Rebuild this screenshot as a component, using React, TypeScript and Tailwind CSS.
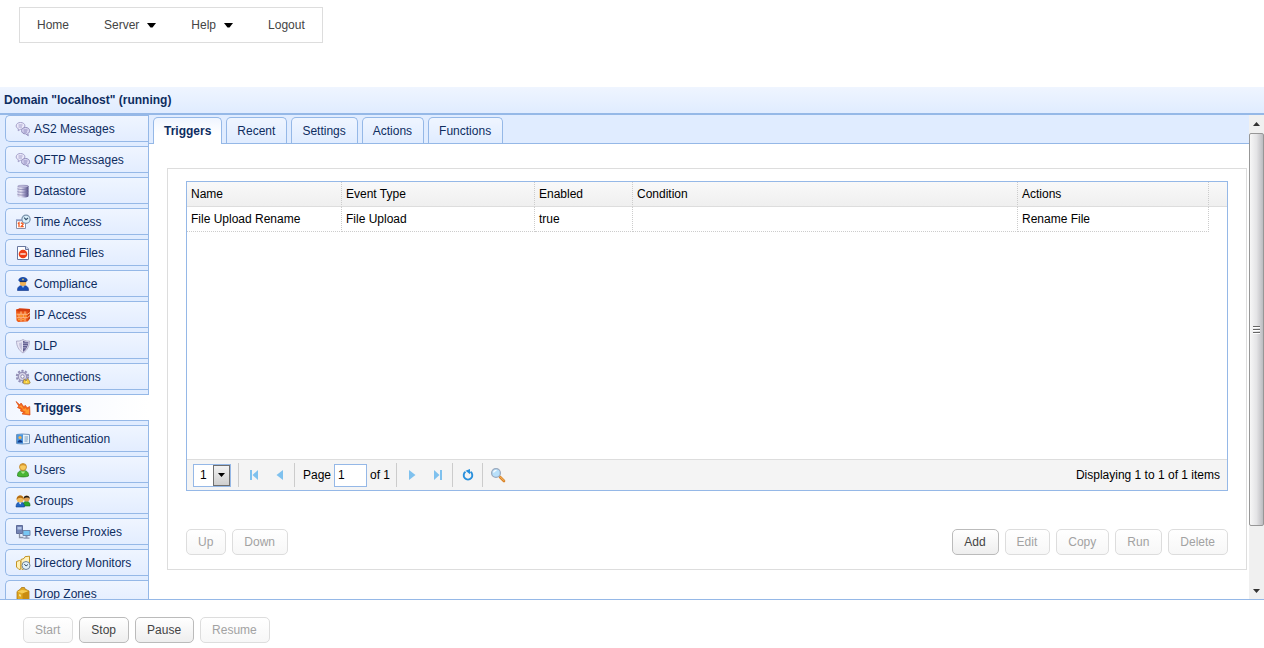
import { useState } from 'react';
import type { ReactNode } from 'react';
import clsx from 'clsx';

function Glyph({ children }: { children: ReactNode }) {
  return (
    <svg viewBox="0 0 16 16" className="w-4 h-4 shrink-0" aria-hidden="true">
      {children}
    </svg>
  );
}

const MessagesIcon = () => (
  <Glyph>
    <path d="M5.500 1.500c2.600 0 4.400 1.400 4.400 3.400S8.100 8.300 5.500 8.300L3.200 9.800 3.400 7.800C2 7.200 1.200 6.200 1.200 4.900c0-2 1.800-3.400 4.300-3.400z" fill="#eceafa" stroke="#a29ec8" />
    <path d="M3.500 4h4M3.500 6h3.500" stroke="#9c98c6" strokeWidth="0.900" />
    <path d="M10.600 6.500c2.500 0 4 1.400 4 3.200 0 1.300-.7 2.200-1.800 2.800l.5 2.200-2.500-1.800c-2.600 0-4.200-1.200-4.200-3.200s1.600-3.200 4-3.200z" fill="#d9d6f2" stroke="#918dbb" />
    <path d="M8.500 9h4M8.500 11h3.500" stroke="#8782b5" strokeWidth="0.900" />
  </Glyph>
);

const DatastoreIcon = () => (
  <Glyph>
    <defs>
      <linearGradient id="db" x1="0" x2="1">
        <stop offset="0" stopColor="#c9c6e2" />
        <stop offset="0.300" stopColor="#e8e6f5" />
        <stop offset="0.650" stopColor="#9a96c2" />
        <stop offset="1" stopColor="#4d497e" />
      </linearGradient>
    </defs>
    <path d="M2.500 3.200C2.500 1.600 13.500 1.600 13.500 3.200v10c0 1.800-11 1.800-11 0z" fill="url(#db)" />
    <path d="M2.500 5.800c1 .9 10 .9 11 0M2.500 8.600c1 .9 10 .9 11 0M2.500 11.400c1 .9 10 .9 11 0" fill="none" stroke="#7975a3" strokeWidth="0.700" />
    <ellipse cx="8" cy="3.200" rx="5.200" ry="1" fill="#c3c0de" stroke="#8884b0" strokeWidth="0.500" />
  </Glyph>
);

const TimeIcon = () => (
  <Glyph>
    <path d="M1.500 6.500h9v8h-9z" fill="#fff" stroke="#8a90a8" />
    <path d="M1 5.300h7v1.900H1z" fill="#8f9cc4" />
    <path d="M2.800 9.600l1.200-.8v4.400M6 9.700c.8-1.300 2.600-.5 2 .8L6.200 12.700h2.500" fill="none" stroke="#f0561d" strokeWidth="1.300" />
    <circle cx="11" cy="5.300" r="4.100" fill="#d9effa" stroke="#7b93ad" strokeWidth="1.200" />
    <path d="M9.200 3.700L11 5.700l2-1.700" fill="none" stroke="#36506c" strokeWidth="1.100" />
  </Glyph>
);

const BannedIcon = () => (
  <Glyph>
    <path d="M2.500 1.500h8.500l2.500 2.500v10.500h-11z" fill="#fff" stroke="#68779f" />
    <path d="M10.500 1.500v3h3" fill="#cdd7ed" stroke="#68779f" />
    <circle cx="8" cy="9" r="4.300" fill="#ee3d16" />
    <path d="M5.300 9h5.400" stroke="#ffd9cc" strokeWidth="1.600" />
  </Glyph>
);

const OfficerIcon = () => (
  <Glyph>
    <path d="M2.500 14.500c-.2-3.500 1.700-5 5.500-5s5.700 1.500 5.500 5z" fill="#174fb8" stroke="#0b2f82" strokeWidth="0.600" />
    <circle cx="8" cy="6.700" r="3.200" fill="#f0b258" />
    <path d="M3.200 4.200C4 2 6 1 8 1s4 1 4.800 3.200l-1.500 1.500H4.700z" fill="#1b4ca7" />
    <path d="M4.800 5.600h6.400" stroke="#0b2a6c" />
    <path d="M7.300 2.800h1.400v1.400H7.300z" fill="#ffd14c" />
    <path d="M6.500 10l1.500 2 1.500-2z" fill="#8eb8f2" />
  </Glyph>
);

const FirewallIcon = () => (
  <Glyph>
    <path d="M1 2.800l3.500-1.300L15 2v9.500l-2.500 3-9.500.5-1.500-1.500z" fill="#ee5a18" />
    <path d="M1 2.800l3.500-1.300L15 2l-2.500 2.200-9.500.3z" fill="#d23c10" />
    <path d="M12.500 4.200L15 2v9.500l-2.500 3z" fill="#cf4010" />
    <path d="M1.500 7.200l11 .1L15 5.500M1.500 10.800l11-.1L15 8.500M6 4.500v2.700M10 4.400v2.800M4 7.200v3.600M8.200 7.200v3.600M6 10.800v3.700M10 10.800v3.600" fill="none" stroke="#ffc08a" />
    <path d="M2.500 8.500h1M5 9h2.300M9.300 9h2.200M3 12.500h2M7 12.600h2" stroke="#ffa42e" strokeWidth="1.400" />
  </Glyph>
);

const ShieldIcon = () => (
  <Glyph>
    <path d="M1.500 3c2.200.3 4.300-.1 6.500-1.500C10.200 2.900 12.300 3.300 14.500 3 14.500 8 12.300 12.300 8 15 3.700 12.300 1.500 8 1.500 3z" fill="#e6e4f2" stroke="#a4a1c0" strokeWidth="0.800" />
    <path d="M8 2.700c1.800 1 3.600 1.400 5.400 1.300C13.200 8 11.500 11.600 8 13.900z" fill="#625e8f" />
    <path d="M8 5.200h5M8 7.500h4.400M8 9.800h3.300" stroke="#aeabce" strokeWidth="0.900" />
    <path d="M4 5c0 3 1 5.500 3 7.500V4.300c-1 .5-2 .7-3 .7z" fill="#c6c3dd" />
  </Glyph>
);

const GearIcon = () => (
  <Glyph>
    <circle cx="7.500" cy="7.500" r="5.700" fill="none" stroke="#928eb6" strokeWidth="2" strokeDasharray="2.200 1.380" />
    <circle cx="7.500" cy="7.500" r="4.200" fill="#dad8ea" stroke="#9793b8" strokeWidth="1.200" />
    <circle cx="7.500" cy="7.500" r="1.700" fill="#fff" stroke="#7773a0" strokeWidth="0.800" />
    <path d="M8 13.800l1.200-4 1.800 2 1.500-2.300 1.700 2 1 2.500-2 1-4-.2z" fill="#f6cb35" stroke="#8c7440" strokeWidth="0.700" />
    <path d="M10.500 13.500l1-1.500 1 1.500z" fill="#fff3b4" />
  </Glyph>
);

const TriggerIcon = () => (
  <Glyph>
    <path d="M1 1.500L5 5l1-2 3 4 1.200-1.800 2 2.600 2.500-1.300.3 8.500-8-1 1.600-1.800L5.500 11 6 9.200 2.500 7.500 3.800 6z" fill="#f4661a" stroke="#dc4c12" strokeWidth="0.700" />
    <path d="M4 6.300l2.300-1 2.500 4L10.500 8l1.500 2 2-1.500V14l-4.500-.7 1.500-1.500-3.500-1.500.4-1.600z" fill="#ff9a2e" />
  </Glyph>
);

const IdCardIcon = () => (
  <Glyph>
    <path d="M1.500 3.500L7 3l7.500.5v9l-7.500.5-5.500-.5z" fill="#e4f1fb" stroke="#7395bb" />
    <path d="M2 3.500l6-.3v9.600l-6-.3z" fill="#4a96e0" />
    <circle cx="5" cy="6.500" r="1.600" fill="#f2b251" />
    <path d="M2.500 11.500c0-3.500 5-3.500 5 0z" fill="#143b88" />
    <path d="M9.500 6h3.500M9.500 8h3.500M9.500 10h3" stroke="#7d9dbd" />
  </Glyph>
);

const UserIcon = () => (
  <Glyph>
    <path d="M2.500 14c-.3-4 2-5.500 5.500-5.500s5.800 1.500 5.500 5.500c-2 1.300-9 1.300-11 0z" fill="#48b535" stroke="#267e20" strokeWidth="0.700" />
    <path d="M5.500 9.500L8 12l2.500-2.500z" fill="#aae593" />
    <circle cx="8" cy="5" r="3.500" fill="#f8c95c" stroke="#b17920" strokeWidth="0.700" />
    <path d="M4.700 4.200C5 .8 11 .8 11.300 4.200 9 2.800 7 2.800 4.700 4.200z" fill="#d3932c" />
  </Glyph>
);

const GroupIcon = () => (
  <Glyph>
    <path d="M7.500 13c0-3 1.500-4.500 4-4.500 2.700 0 3.700 1.700 3.500 4.500z" fill="#2da82b" stroke="#176a19" strokeWidth="0.600" />
    <circle cx="11.700" cy="5.500" r="3" fill="#e0a055" />
    <path d="M8.600 6c-.4-4.500 6.500-4.500 6.200 0-1-1.700-4-2-6.200 0z" fill="#1c1c1c" />
    <path d="M1 14c0-3.500 1.500-5 4.200-5S9.500 10.500 9.500 14z" fill="#2367c4" stroke="#123f8d" strokeWidth="0.600" />
    <circle cx="5.200" cy="6" r="3.500" fill="#f2bb57" />
    <path d="M1.700 7c-.8-6 7.800-6 7 0-1-2.800-5.500-3-7 0z" fill="#b36d16" />
    <path d="M3.800 9.500l1.400 2 1.400-2z" fill="#fff" />
  </Glyph>
);

const ProxyIcon = () => (
  <Glyph>
    <path d="M1.500 1.500h6v8h-6z" fill="#7484b4" stroke="#5f6c99" />
    <path d="M2.500 3h4v2.500h-4z" fill="#b5c6e8" />
    <path d="M4.500 9.500v4h4" fill="none" stroke="#8890a3" strokeWidth="1.300" />
    <path d="M8 6.500h7v5H8z" fill="#76c6f3" stroke="#7286a9" />
    <path d="M10.500 12h2v1.500h-2zM8.500 13.500h6v1.300h-6z" fill="#8a97b2" />
  </Glyph>
);

const FolderClockIcon = () => (
  <Glyph>
    <path d="M1.500 6.500l3-1 1.500 1v7.500l-2 .5-2.500-2.500z" fill="#fff0b5" stroke="#c39425" />
    <path d="M6 4.500l3-1 1-1.800 4.500-.5V12L7 14.500l-1-1z" fill="#fff2bd" stroke="#c39425" />
    <circle cx="11" cy="10.500" r="4" fill="#e1f1fa" stroke="#6e8399" />
    <path d="M9.300 9l1.700 2 2-1.500" fill="none" stroke="#3c536b" />
  </Glyph>
);

const BoxIcon = () => (
  <Glyph>
    <path d="M2 5.500L5.500 3l1-1.500h3l.5 1.500 4 2v8l-6.500 2.500L2 13z" fill="#e0a822" stroke="#a36c09" strokeWidth="0.700" />
    <path d="M2 5.500L7 4l7 1-6.500 2.500z" fill="#f6cd57" />
    <path d="M7.500 7.500v8L14 13V5z" fill="#c98c12" />
    <path d="M4 8l2 .8v2L4 10z" fill="#f8dd86" />
  </Glyph>
);

const SECTIONS = [
  { label: 'AS2 Messages', icon: MessagesIcon },
  { label: 'OFTP Messages', icon: MessagesIcon },
  { label: 'Datastore', icon: DatastoreIcon },
  { label: 'Time Access', icon: TimeIcon },
  { label: 'Banned Files', icon: BannedIcon },
  { label: 'Compliance', icon: OfficerIcon },
  { label: 'IP Access', icon: FirewallIcon },
  { label: 'DLP', icon: ShieldIcon },
  { label: 'Connections', icon: GearIcon },
  { label: 'Triggers', icon: TriggerIcon },
  { label: 'Authentication', icon: IdCardIcon },
  { label: 'Users', icon: UserIcon },
  { label: 'Groups', icon: GroupIcon },
  { label: 'Reverse Proxies', icon: ProxyIcon },
  { label: 'Directory Monitors', icon: FolderClockIcon },
  { label: 'Drop Zones', icon: BoxIcon },
];

const TABS = ['Triggers', 'Recent', 'Settings', 'Actions', 'Functions'];

const TRIGGERS = [
  { name: 'File Upload Rename', event: 'File Upload', enabled: true, condition: '', actions: 'Rename File' },
];

function Caret() {
  return (
    <svg viewBox="0 0 9 5" className="w-[9px] h-[5px]" aria-hidden="true">
      <path d="M0 0h9L5.500 4.500h-2z" fill="#000" />
    </svg>
  );
}

function MenuBar() {
  return (
    <nav className="self-start mt-[7px] ml-[19px] h-9 px-[17px] flex items-center gap-[35px] border border-[#ddd] text-[#444]">
      <a href="#home">Home</a>
      <button type="button" className="flex items-center gap-2">Server <Caret /></button>
      <button type="button" className="flex items-center gap-2">Help <Caret /></button>
      <a href="#logout">Logout</a>
    </nav>
  );
}

function Button({ children, disabled = false }: { children: ReactNode; disabled?: boolean }) {
  return (
    <button
      type="button"
      disabled={disabled}
      className={clsx(
        'h-[26px] pl-[11px] pr-3 rounded-[5px] border bg-linear-to-b from-white',
        disabled ? 'border-[#ddd] to-[#f7f7f7] text-[#a2a2a2]' : 'border-[#bbb] to-[#eee] text-[#444]',
      )}
    >
      {children}
    </button>
  );
}

function SideNav() {
  const [active, setActive] = useState('Triggers');

  return (
    <nav className="w-[149px] shrink-0 overflow-hidden bg-[#e0ecff]">
      <ul>
        {SECTIONS.map(({ label, icon: SectionIcon }) => (
          <li key={label} className="pl-[5px] pb-1 border-r border-[#95b8e7]">
            <a
              href="#section"
              onClick={() => setActive(label)}
              className={clsx(
                'h-[27px] pl-[9px] flex items-center gap-[3px] border border-r-0 border-[#95b8e7] rounded-l-[5px] whitespace-nowrap',
                active === label
                  ? 'relative -mr-px bg-linear-to-r from-[#f3f7ff] to-white font-bold text-[#0e2d5f]'
                  : 'bg-linear-to-b from-[#eff5ff] to-[#e3edff] text-[#0e2d5f]',
              )}
            >
              <SectionIcon />
              {label}
            </a>
          </li>
        ))}
      </ul>
    </nav>
  );
}

function TabStrip() {
  const [active, setActive] = useState('Triggers');

  return (
    <div role="tablist" className="h-[29px] pl-1 flex items-end gap-1 bg-[#e0ecff] border-b border-[#95b8e7]">
      {TABS.map((tab) => (
        <button
          key={tab}
          type="button"
          role="tab"
          aria-selected={active === tab}
          onClick={() => setActive(tab)}
          className={clsx(
            'pl-[10px] border border-b-0 border-[#95b8e7] rounded-t-[5px] text-[#0e2d5f]',
            active === tab
              ? 'h-[27px] pr-[10px] relative -mb-px bg-linear-to-b from-[#eff5ff] to-white to-60% font-bold'
              : 'h-[26px] pr-[11px] bg-linear-to-b from-[#eff5ff] to-[#e0ecff]',
          )}
        >
          {tab}
        </button>
      ))}
    </div>
  );
}

function Separator() {
  return <span className="w-px h-6 ml-px mr-0.5 bg-[#ccc]" />;
}

function PagerButton({ label, children }: { label: string; children: ReactNode }) {
  return (
    <button type="button" aria-label={label} className="w-[26px] h-[26px] flex items-center justify-center">
      {children}
    </button>
  );
}

function ArrowGlyph({ d }: { d: string }) {
  return (
    <svg viewBox="0 0 16 16" className="w-4 h-4" aria-hidden="true">
      <path d={d} fill="#7fc1ee" />
    </svg>
  );
}

function Pager() {
  return (
    <div className="h-[31px] pl-1.5 pr-[7px] flex items-center border-t border-[#ddd] bg-[#f4f4f4]">
      <div className="relative w-[38px] h-[23px] mr-1.5">
        <select aria-label="Page size" defaultValue="1" className="w-full h-full pl-1.5 appearance-none bg-white border border-[#95b8e7]">
          <option>1</option>
        </select>
        <span className="absolute top-px right-px bottom-px w-[17px] flex items-center justify-center border border-[#6f6f6f] bg-linear-to-b from-[#f2f2f2] to-[#cfcfcf] pointer-events-none">
          <svg viewBox="0 0 7 4" className="w-[7px] h-1" aria-hidden="true">
            <path d="M0 0h7L3.500 4z" fill="#000" />
          </svg>
        </span>
      </div>
      <Separator />
      <PagerButton label="First page"><ArrowGlyph d="M4 3h2v10H4zM12 3v10L6.500 8z" /></PagerButton>
      <PagerButton label="Previous page"><ArrowGlyph d="M11 3v10L4.500 8z" /></PagerButton>
      <Separator />
      <label className="pl-1.5 flex items-center">
        <span className="w-[31px]">Page</span>
        <input type="text" defaultValue="1" className="w-[33px] h-[23px] px-[3px] bg-white border border-[#95b8e7]" />
      </label>
      <span className="w-7 pl-[3px] whitespace-nowrap">of 1</span>
      <Separator />
      <PagerButton label="Next page"><ArrowGlyph d="M5 3v10l6.500-5z" /></PagerButton>
      <PagerButton label="Last page"><ArrowGlyph d="M4 3v10l5.500-5zM10 3h2v10h-2z" /></PagerButton>
      <Separator />
      <PagerButton label="Refresh">
        <svg viewBox="0 0 16 16" className="w-4 h-4" aria-hidden="true">
          <path d="M10.500 4.800a4.300 4.300 0 1 1-5 0" fill="none" stroke="#2a90dc" strokeWidth="1.900" />
          <path d="M10 2v5.200L5.500 3.800z" fill="#2a90dc" />
        </svg>
      </PagerButton>
      <Separator />
      <PagerButton label="Search">
        <svg viewBox="0 0 16 16" className="w-4 h-4" aria-hidden="true">
          <path d="M10 10l4 4" stroke="#d98328" strokeWidth="2.600" strokeLinecap="round" />
          <path d="M10 9.700l3.800 3.800" stroke="#f7bd6a" strokeLinecap="round" />
          <circle cx="6" cy="6" r="4.400" fill="#b8e0fb" stroke="#9aa9be" strokeWidth="1.300" />
          <path d="M3.500 5.500c.4-1.500 1.500-2.200 3-2.200" fill="none" stroke="#fff" strokeWidth="1.200" />
        </svg>
      </PagerButton>
      <span className="ml-auto">Displaying 1 to 1 of 1 items</span>
    </div>
  );
}

function TriggerGrid() {
  const head = 'h-[25px] px-1 font-normal border-b border-b-[#ddd] border-r border-r-[#ccc] [border-right-style:dotted]';
  const cell = 'h-[25px] px-1 border-r border-b border-dotted border-[#ccc]';

  return (
    <div className="h-[310px] flex flex-col border border-[#95b8e7] text-black">
      <table className="w-full table-fixed border-separate border-spacing-0 text-left">
        <colgroup>
          <col className="w-[155px]" />
          <col className="w-[193px]" />
          <col className="w-[98px]" />
          <col />
          <col className="w-[191px]" />
          <col className="w-[18px]" />
        </colgroup>
        <thead className="bg-linear-to-b from-[#f9f9f9] to-[#efefef]">
          <tr>
            <th className={head}>Name</th>
            <th className={head}>Event Type</th>
            <th className={head}>Enabled</th>
            <th className={head}>Condition</th>
            <th className={head}>Actions</th>
            <td className="border-b border-[#ddd]" />
          </tr>
        </thead>
        <tbody>
          {TRIGGERS.map((trigger) => (
            <tr key={trigger.name}>
              <td className={cell}>{trigger.name}</td>
              <td className={cell}>{trigger.event}</td>
              <td className={cell}>{String(trigger.enabled)}</td>
              <td className={cell}>{trigger.condition}</td>
              <td className={cell}>{trigger.actions}</td>
              <td />
            </tr>
          ))}
        </tbody>
      </table>
      <div className="mt-auto">
        <Pager />
      </div>
    </div>
  );
}

function ScrollBar() {
  return (
    <div className="w-[15px] shrink-0 flex flex-col bg-[#f0f0f0]" aria-hidden="true">
      <div className="h-[18px] flex items-center justify-center">
        <svg viewBox="0 0 7 4" className="w-[7px] h-1"><path d="M0 4h7L3.500 0z" fill="#333" /></svg>
      </div>
      <div className="flex-[393] flex flex-col items-center justify-center gap-px border border-[#979797] rounded-[2px] bg-linear-to-r from-[#f7f7f7] via-[#e4e4e6] to-[#bcbcc0]">
        <span className="w-[7px] h-0.5 bg-[#666] border-b border-white" />
        <span className="w-[7px] h-0.5 bg-[#666] border-b border-white" />
        <span className="w-[7px] h-0.5 bg-[#666] border-b border-white" />
      </div>
      <div className="flex-[56]" />
      <div className="h-[17px] flex items-center justify-center">
        <svg viewBox="0 0 7 4" className="w-[7px] h-1"><path d="M0 0h7L3.500 4z" fill="#333" /></svg>
      </div>
    </div>
  );
}

export default function App() {
  return (
    <div className="h-screen flex flex-col bg-white font-['Liberation_Sans',Arial,sans-serif] text-xs overflow-hidden">
      <MenuBar />

      <header className="mt-11 h-7 px-1 shrink-0 flex items-center border-b-2 border-[#95b8e7] bg-linear-to-b from-[#eff5ff] to-[#e0ecff]">
        <h1 className="font-bold text-[#0e2d5f]">Domain "localhost" (running)</h1>
      </header>

      <div className="flex-1 min-h-0 flex border-b border-[#95b8e7]">
        <SideNav />
        <main className="flex-1 min-w-0">
          <TabStrip />
          <section className="mt-6 ml-[18px] mr-0.5 pt-3 px-[18px] pb-[14px] border border-[#ddd]">
            <TriggerGrid />
            <div className="mt-[38px] flex gap-1.5">
              <Button disabled>Up</Button>
              <Button disabled>Down</Button>
              <div className="ml-auto flex gap-1.5">
                <Button>Add</Button>
                <Button disabled>Edit</Button>
                <Button disabled>Copy</Button>
                <Button disabled>Run</Button>
                <Button disabled>Delete</Button>
              </div>
            </div>
          </section>
        </main>
        <ScrollBar />
      </div>

      <footer className="h-12 shrink-0 pt-[17px] pl-[23px] flex items-start gap-1.5">
        <Button disabled>Start</Button>
        <Button>Stop</Button>
        <Button>Pause</Button>
        <Button disabled>Resume</Button>
      </footer>
    </div>
  );
}
